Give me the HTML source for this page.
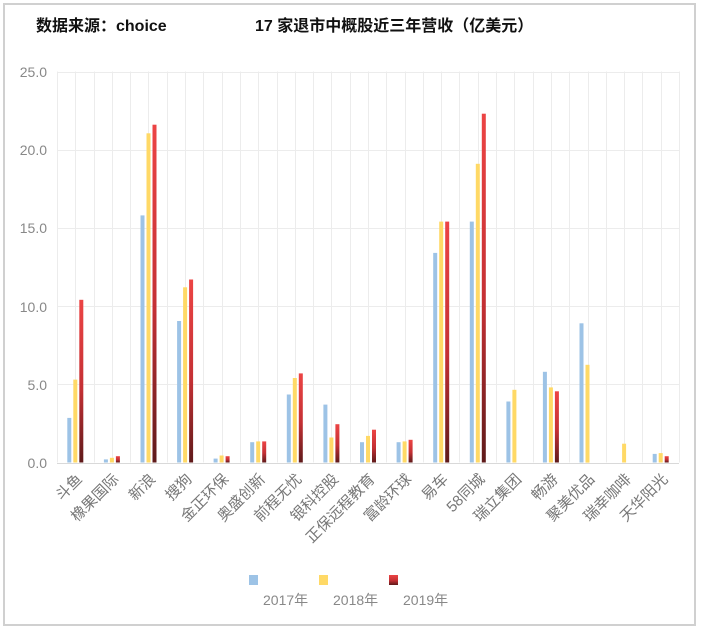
<!DOCTYPE html>
<html><head><meta charset="utf-8"><style>
html,body{margin:0;padding:0;background:#fff;width:705px;height:632px;overflow:hidden}
svg{display:block}
.t{font-family:"Liberation Sans","Noto Sans CJK SC",sans-serif}
</style></head><body>
<svg id="s" width="705" height="632" xmlns="http://www.w3.org/2000/svg">
<defs>
<linearGradient id="rg" x1="0" y1="0" x2="0" y2="1"><stop offset="0" stop-color="#ec4444"/><stop offset="0.55" stop-color="#c43034"/><stop offset="1" stop-color="#5e1a1a"/></linearGradient>
</defs>
<rect x="4" y="4" width="691" height="621" fill="#fff" stroke="#d0d0d0" stroke-width="2"/>
<g id="grid" stroke="#ececec" stroke-width="1"></g>
<g id="bars"></g>
<text class="t" x="36" y="31" font-size="16" font-weight="bold" fill="#111">数据来源：choice</text>
<text class="t" x="255" y="31" font-size="16" font-weight="bold" fill="#111">17 家退市中概股近三年营收（亿美元）</text>
<g class="t" font-size="14" fill="#888" text-anchor="end">
<text x="47" y="77">25.0</text><text x="47" y="155">20.0</text><text x="47" y="233">15.0</text>
<text x="47" y="312">10.0</text><text x="47" y="390">5.0</text><text x="47" y="468">0.0</text>
</g>
<g class="t" font-size="15" fill="#777" text-anchor="end">
<text transform="translate(83,480) rotate(-45)">斗鱼</text>
<text transform="translate(119.6,480) rotate(-45)">橡果国际</text>
<text transform="translate(156.2,480) rotate(-45)">新浪</text>
<text transform="translate(192.8,480) rotate(-45)">搜狗</text>
<text transform="translate(229.4,480) rotate(-45)">金正环保</text>
<text transform="translate(266,480) rotate(-45)">奥盛创新</text>
<text transform="translate(302.6,480) rotate(-45)">前程无忧</text>
<text transform="translate(339.2,480) rotate(-45)">银科控股</text>
<text transform="translate(375.8,480) rotate(-45)">正保远程教育</text>
<text transform="translate(412.4,480) rotate(-45)">富龄环球</text>
<text transform="translate(449,480) rotate(-45)">易车</text>
<text transform="translate(485.6,480) rotate(-45)">58同城</text>
<text transform="translate(522.2,480) rotate(-45)">瑞立集团</text>
<text transform="translate(558.8,480) rotate(-45)">畅游</text>
<text transform="translate(595.4,480) rotate(-45)">聚美优品</text>
<text transform="translate(632,480) rotate(-45)">瑞幸咖啡</text>
<text transform="translate(668.6,480) rotate(-45)">天华阳光</text>
</g>
<rect x="249" y="575" width="9" height="10" fill="#9dc3e6"/>
<rect x="319" y="575" width="9" height="10" fill="#ffd966"/>
<rect x="389" y="575" width="9" height="10" fill="url(#rg)"/>
<g class="t" font-size="14" fill="#888">
<text x="263" y="605">2017年</text><text x="333" y="605">2018年</text><text x="403" y="605">2019年</text>
</g>
</svg>
<script>
var NS="http://www.w3.org/2000/svg",g=document.getElementById('grid'),b=document.getElementById('bars');
function el(p,t,a){var e=document.createElementNS(NS,t);for(var k in a)e.setAttribute(k,a[k]);p.appendChild(e);}
var x0=57,x1=679,w=(x1-x0)/17,base=462.5,sc=(462.5-71.5)/25;
for(var i=0;i<=34;i++){var x=Math.round(x0+i*w/2)+0.5;el(g,'line',{x1:x,x2:x,y1:71.5,y2:base});}
for(var j=0;j<=5;j++){var y=Math.round(base-j*5*sc)+0.5;el(g,'line',{x1:x0,x2:x1,y1:y,y2:y,stroke:j==0?'#d9d9d9':'#ececec'});}
var d=[[2.85,5.3,10.4],[0.2,0.3,0.4],[15.8,21.05,21.6],[9.05,11.2,11.7],[0.25,0.45,0.4],[1.3,1.35,1.35],[4.35,5.4,5.7],[3.7,1.6,2.45],[1.3,1.7,2.1],[1.3,1.35,1.45],[13.4,15.4,15.4],[15.4,19.1,22.3],[3.9,4.65,0],[5.8,4.8,4.55],[8.9,6.25,0],[0,1.2,0],[0.55,0.6,0.4]];
var col=['#9dc3e6','#ffd966','url(#rg)'];
d.forEach(function(v,i){var c=x0+w*(i+0.5);v.forEach(function(val,k){if(!val)return;var h=val*sc;el(b,'rect',{x:(c-8+k*6).toFixed(1),y:(base-h).toFixed(1),width:4,height:h.toFixed(1),fill:col[k]});});});
</script>
</body></html>
